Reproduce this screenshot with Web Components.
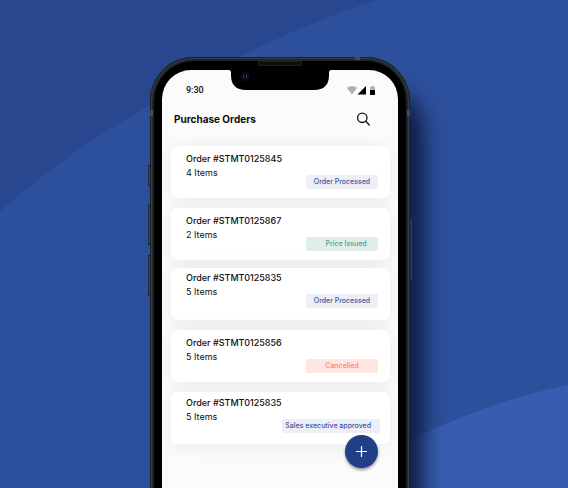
<!DOCTYPE html>
<html lang="en">
<head>
<meta charset="utf-8">
<meta name="viewport" content="width=device-width, initial-scale=1">
<title>Purchase Orders</title>
<style>
  html, body { margin: 0; }
  body { font-family: Inter, "Liberation Sans", sans-serif; color: #0e1014; background: #2d509c; }
</style>
</head>
<body>
<showcase-stage>
  <phone-frame>
    <status-bar>9:30</status-bar>
    <app-header>Purchase Orders</app-header>
    <order-list>
      <order-card items="4 Items" status="Order Processed">Order #STMT0125845</order-card>
      <order-card items="2 Items" status="Price Issued" tone="issued">Order #STMT0125867</order-card>
      <order-card items="5 Items" status="Order Processed" raised>Order #STMT0125835</order-card>
      <order-card items="5 Items" status="Cancelled" tone="cancelled">Order #STMT0125856</order-card>
      <order-card items="5 Items" status="Sales executive approved" tone="approved" raised last>Order #STMT0125835</order-card>
      <add-button slot="action"></add-button>
    </order-list>
  </phone-frame>
</showcase-stage>

<script>
const define = (name, html, setup) => {
  const template = document.createElement('template');
  template.innerHTML = html;
  customElements.define(name, class extends HTMLElement {
    constructor() {
      super();
      this.attachShadow({ mode: 'open' }).append(template.content.cloneNode(true));
    }
    connectedCallback() { if (setup) setup(this, this.shadowRoot); }
  });
};

define('showcase-stage', `
  <style>
    :host { display: grid; grid-template-columns: 150fr 260fr 158fr; min-height: 100vh;
      padding-top: 57px; box-sizing: border-box; position: relative; overflow: hidden; }
    .backdrop { position: absolute; inset: 0; width: 100%; height: 100%; }
    ::slotted(*) { grid-column: 2; }
  </style>
  <svg class="backdrop" viewBox="0 0 568 488" preserveAspectRatio="none" aria-hidden="true">
    <path fill="#28478e" d="M0 0H377Q306 23 239 57Q190 80 148 106Q66 153 0 211Z"/>
    <path fill="#385db0" d="M340 488Q370 458 411 440Q489 401 568 385V488Z"/>
  </svg>
  <slot></slot>`);

define('phone-frame', `
  <style>
    :host { display: block; position: relative; box-sizing: border-box; margin-bottom: -20px;
      padding: 13px 12px 0; border-radius: 44px 44px 0 0; background: #000;
      box-shadow: inset 0 0 0 1px #1d2229, inset 0 0 0 2px #373d45, inset 0 0 0 4px #1f2429,
        16px 30px 20px -2px rgba(12, 20, 55, .85); }
    main { height: 100%; box-sizing: border-box; border-radius: 29px 29px 0 0; background: #fbfbfb;
      display: flex; flex-direction: column; overflow: hidden; }
    .notch { position: absolute; top: 13px; left: 50%; width: 102px; height: 21px; margin-left: -51px; }
    .speaker { position: absolute; top: 4px; left: 50%; width: 42px; height: 3px; margin-left: -22px;
      border: 1px solid #1b1d20; border-radius: 0 0 2px 2px; background: #0d0e10; }
    .key { position: absolute; left: -2px; width: 2px; box-sizing: border-box; background: #3a4149;
      border: solid #171b21; border-width: 1px 0; border-left: 1px solid #252d42; }
    .mute { top: 108px; height: 21px; }
    .up { top: 147px; height: 41px; }
    .down { top: 198px; height: 41px; }
    .power { top: 161px; height: 63px; left: auto; right: -2px; }
    .band { position: absolute; background: #444857; }
    .band.t { top: 0; right: 50px; width: 5px; height: 3px; }
    .band.l { top: 53px; left: 0; width: 3px; height: 6px; }
    .band.r { top: 53px; right: 0; width: 3px; height: 6px; }
  </style>
  <main><slot></slot></main>
  <svg class="notch" viewBox="0 0 102 21" aria-hidden="true">
    <path d="M0 0Q2 0 2 3V5Q2 20 17 20H85Q100 20 100 5V3Q100 0 102 0Z"/>
    <circle cx="16" cy="6.500" r="4.500" fill="#0c0e14"/>
    <circle cx="16" cy="6.500" r="3" fill="#080b18"/>
    <path d="M14.500 5V8" stroke="#1c4a4c" stroke-width="1"/>
    <path d="M17.500 5V8" stroke="#2d3f9a" stroke-width="1"/>
  </svg>
  <i class="speaker"></i>
  <i class="key mute"></i><i class="key up"></i><i class="key down"></i><i class="key power"></i>
  <i class="band t"></i><i class="band l"></i><i class="band r"></i>`);

define('status-bar', `
  <style>
    :host { display: flex; align-items: center; justify-content: space-between; height: 12px;
      padding: 14px 22px 0 24px; font: 500 9px/12px Roboto, sans-serif; }
    svg { display: block; width: 30px; height: 10px; }
  </style>
  <slot></slot>
  <svg viewBox="0 0 30 10" role="img" aria-label="Wi-Fi, signal, battery">
    <path fill="#b1b1b1" d="M.8 2.800Q6 -1 11.200 2.800L6 9.500Z"/>
    <path d="M20 1V9.500H11.500Z"/>
    <path fill="#b1b1b1" d="M24 5V1.800H25.500V.8H27.500V1.800H29V5Z"/>
    <path d="M24 5H29V9.500Q29 10 28.500 10H24.500Q24 10 24 9.500Z"/>
  </svg>`);

define('app-header', `
  <style>
    :host { display: flex; align-items: center; justify-content: space-between;
      padding: 14px 26px 0 12px; }
    h1 { margin: 0; font-size: 10px; line-height: 18px; font-weight: 700; color: #0b0b0d; }
    button { border: 0; padding: 2px; background: none; color: #111; }
    svg { display: block; width: 14px; height: 14px; }
  </style>
  <h1><slot></slot></h1>
  <button aria-label="Search"><svg viewBox="0 0 14 14" fill="none" stroke="currentColor" stroke-width="1.300" stroke-linecap="round">
    <circle cx="6.300" cy="5.800" r="4.700"/><path d="M9.800 9.300L13.300 13"/></svg></button>`);

define('order-list', `
  <style>
    :host { display: block; position: relative; margin: 18px 8px 0 9px; }
    .cards { display: flex; flex-direction: column; gap: 10px; }
    .action { position: absolute; right: 12px; bottom: -24px; }
  </style>
  <div class="cards" role="list"><slot></slot></div>
  <div class="action"><slot name="action"></slot></div>`);

define('order-card', `
  <style>
    :host { display: flex; flex-direction: column; box-sizing: border-box; height: 52px;
      padding: 6px 12px 0 15px; border-radius: 7px; background: #fff;
      box-shadow: 0 2px 20px rgba(0, 0, 0, .07); }
    :host([raised]) { padding-top: 3px; }
    :host([raised]:not([last])) { margin-top: -2px; }
    :host([last]) { padding: 4px 10px 0 15px; }
    h2, p { margin: 0; font-size: 9px; line-height: 14px; font-weight: 500; }
    p { font-weight: 400; }
    .status { align-self: flex-end; box-sizing: border-box; min-width: 72px; margin-top: -5px;
      padding: 0 5px; border-radius: 2px; font-size: 7px; line-height: 14px; font-weight: 500;
      text-align: center; color: #3d549b; background: #eeeff6; }
    :host([tone="issued"]) .status { padding-left: 13px; color: #4ba387; background: #dfeeea; }
    :host([tone="cancelled"]) .status { color: #ff8276; background: #ffe6e3; }
    :host([tone="approved"]) .status { padding: 0 9px 0 3px; }
  </style>
  <h2><slot></slot></h2>
  <p></p>
  <span class="status"></span>`, (host, root) => {
    host.setAttribute('role', 'listitem');
    root.querySelector('p').textContent = host.getAttribute('items');
    root.querySelector('.status').textContent = host.getAttribute('status');
  });

define('add-button', `
  <style>
    :host { display: block; }
    button { display: grid; place-items: center; width: 33px; height: 33px; padding: 0; border: 0;
      border-radius: 50%; background: #213f86; color: #fff; box-shadow: 0 2px 3px rgba(0, 0, 0, .4); }
    svg { display: block; width: 11px; height: 11px; }
  </style>
  <button aria-label="Add order"><svg viewBox="0 0 11 11" fill="none" stroke="currentColor" stroke-width="1.200">
    <path d="M5.500 0V11M0 5.500H11"/></svg></button>`);
</script>
</body>
</html>
